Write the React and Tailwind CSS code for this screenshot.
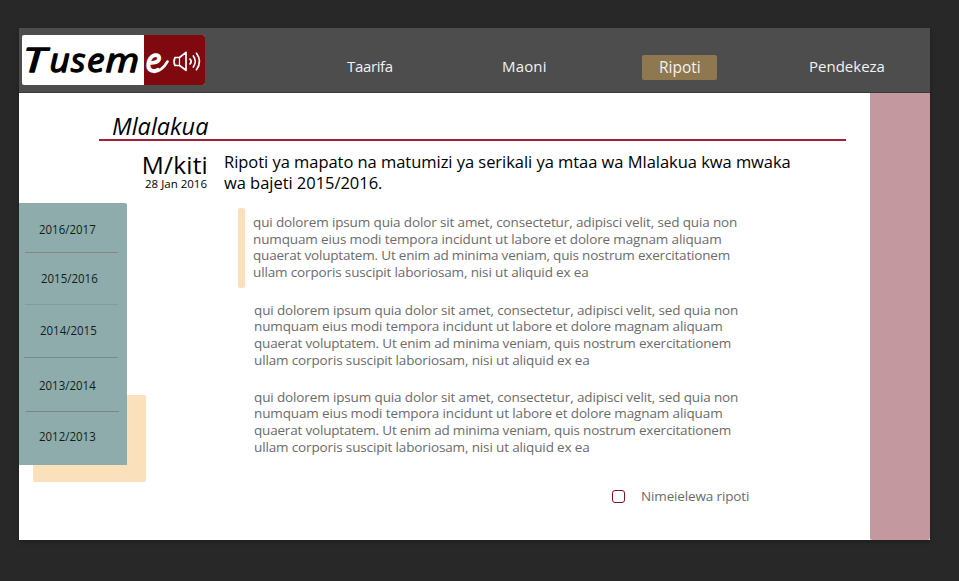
const paragraph = [
  { text: 'qui dolorem ipsum quia dolor sit amet, consectetur, adipisci velit, sed quia non', spacing: 'tracking-[-0.13px]' },
  { text: 'numquam eius modi tempora incidunt ut labore et dolore magnam aliquam', spacing: 'tracking-[-0.13px]' },
  { text: 'quaerat voluptatem. Ut enim ad minima veniam, quis nostrum exercitationem', spacing: 'tracking-[-0.19px]' },
  { text: 'ullam corporis suscipit laboriosam, nisi ut aliquid ex ea', spacing: 'tracking-[-0.14px]' },
];

const years = [
  { label: '2016/2017', row: 'h-[49px] pl-5 pt-[3px]', rule: 'ml-[6px] w-[93px] bg-[#8d8286]' },
  { label: '2015/2016', row: 'h-[51px] pl-[22px]', rule: 'ml-[6px] w-[93px] bg-[#859b9a]' },
  { label: '2014/2015', row: 'h-[52px] pl-[21px] pb-[1px]', rule: 'ml-[5px] w-[94px] bg-[#7f8988]' },
  { label: '2013/2014', row: 'h-[53px] pl-5 pt-[2px]', rule: 'ml-[7px] w-[93px] bg-[#7f8183]' },
  { label: '2012/2013', row: 'h-[53px] pl-5 pb-[4px]', rule: null },
];

const letters = [
  { char: 'T', x: 1, stretch: 1.35 },
  { char: 'u', x: 27.5, stretch: 1.05 },
  { char: 's', x: 49, stretch: 1 },
  { char: 'e', x: 65, stretch: 1.05 },
  { char: 'm', x: 83.5, stretch: 1.15 },
  { char: 'e', x: 123.5, stretch: 0.95 },
];

function Logo() {
  return (
    <svg className="ml-[3px] mt-[7px]" width="183" height="50" viewBox="0 0 183 50" role="img">
      <rect width="183" height="50" rx="2" fill="#fff" />
      <path d="M122 0h59a2 2 0 0 1 2 2v46a2 2 0 0 1-2 2h-59Z" fill="#800910" />
      {letters.map((l) => (
        <text
          key={l.x}
          transform={`translate(${l.x} 37.2) scale(${l.stretch} 1)`}
          fontFamily="Open Sans"
          fontStyle="italic"
          fontSize="33.5"
          fill={l.x > 120 ? '#fff' : '#000'}
          stroke={l.x > 120 ? '#fff' : '#000'}
          strokeWidth="1.4"
          strokeLinejoin="round"
        >
          {l.char}
        </text>
      ))}
      <path d="M132 37q8-1 13.5-10.5" fill="none" stroke="#fff" strokeWidth="2.6" strokeLinecap="round" />
      <g fill="none" stroke="#fff" strokeWidth="1.7" strokeLinecap="round" strokeLinejoin="round">
        <path d="M153 22.5h4.5l6.5-5.2v18l-6.5-4.8H153q-2-4 0-8Z" />
        <path d="M157.5 22.5v8" strokeWidth="1.2" />
        <path d="M168 24q2.4 2.5 0 5M171.3 21q4 5.5 0 11M174.5 18.3q6 8.2 0 16.4" />
      </g>
    </svg>
  );
}

function Header() {
  return (
    <header className="flex h-[65px] border-b border-[#3a3a3a] bg-[#4d4d4d] font-['Open_Sans'] text-[15px] leading-[25px] text-[#f2f2f2]">
      <Logo />
      <nav className="flex pt-[27px]">
        <a className="-mt-px ml-[142px] w-[155px] tracking-[-0.35px]">Taarifa</a>
        <a className="-mt-px w-[140px] tracking-[0.15px]">Maoni</a>
        <a className="h-[25px] w-[75px] rounded-[2px] bg-[#8f7750] pl-[17px] text-[15.5px]">Ripoti</a>
        <a className="-mt-px ml-[92px]">Pendekeza</a>
      </nav>
    </header>
  );
}

function Sidebar() {
  return (
    <aside className="relative h-[279px] w-[128px]">
      <div className="absolute left-[14px] top-[192px] h-[87px] w-[113px] rounded-[2px] bg-[#fbe0bc]" />
      <div className="relative h-[262px] w-[108px] rounded-tr-[2px] bg-[#8dacab] text-[13.5px] text-[#151b1b]">
        {years.map((y) => (
          <div key={y.label}>
            <div className={`flex items-center ${y.row}`}>
              <span className="origin-left scale-x-[0.85]">{y.label}</span>
            </div>
            {y.rule && <div className={`h-px ${y.rule}`} />}
          </div>
        ))}
      </div>
    </aside>
  );
}

function Paragraph({ marked }) {
  return (
    <div className="mb-[7px] flex h-20">
      <div className={`h-20 w-[7px] rounded-[2px] ${marked ? 'bg-[#fbe0bc]' : ''}`} />
      <p className={`whitespace-nowrap text-[13.5px] leading-[16.7px] text-[#6b6b6b] ${marked ? 'pl-2 pt-[6px]' : 'pl-[9px] pt-[6.5px]'}`}>
        {paragraph.map((line) => (
          <span key={line.text} className={`block ${line.spacing}`}>{line.text}</span>
        ))}
      </p>
    </div>
  );
}

export default function App() {
  return (
    <div className="h-[581px] w-[959px] overflow-hidden bg-[#282828] pl-[19px] pt-7 font-['Open_Sans',sans-serif]">
      <div className="h-[512px] w-[911px] bg-white shadow-[0_2px_4px_rgba(0,0,0,0.25)]">
        <Header />
        <div className="flex h-[447px]">
          <main className="w-[851px]">
            <h1 className="ml-20 h-[48px] w-[747px] border-b-2 border-[#a31f35] pl-[13px] pt-[19px] text-[23.5px] italic leading-[28px] text-black">
              Mlalakua
            </h1>
            <div className="flex h-[62px] text-black">
              <div className="w-[189px] pt-[11px] text-right">
                <div className="text-[24.5px] leading-[26px] tracking-[0.2px]">M/kiti</div>
                <div className="pr-px text-[11.5px] leading-[12px]">28 Jan 2016</div>
              </div>
              <h2 className="whitespace-nowrap pl-4 pt-[10px] text-[16.5px] leading-[21px] tracking-[-0.04px]">
                <span className="block">Ripoti ya mapato na matumizi ya serikali ya mtaa wa Mlalakua kwa mwaka</span>
                <span className="block">wa bajeti 2015/2016.</span>
              </h2>
            </div>
            <div className="flex">
              <Sidebar />
              <section className="pl-[91px] pt-[5px]">
                <Paragraph marked />
                <Paragraph />
                <Paragraph />
                <label className="flex items-center pl-[374px] pt-[18px] text-[13.5px] leading-[18px] tracking-[-0.14px] text-[#6b6b6b]">
                  <span className="mr-4 h-[13px] w-[13px] rounded-[3px] border-[1.5px] border-[#7d1724]" />
                  Nimeielewa ripoti
                </label>
              </section>
            </div>
          </main>
          <div className="w-[60px] rounded-b-[2px] bg-[#c3989e]" />
        </div>
      </div>
    </div>
  );
}
